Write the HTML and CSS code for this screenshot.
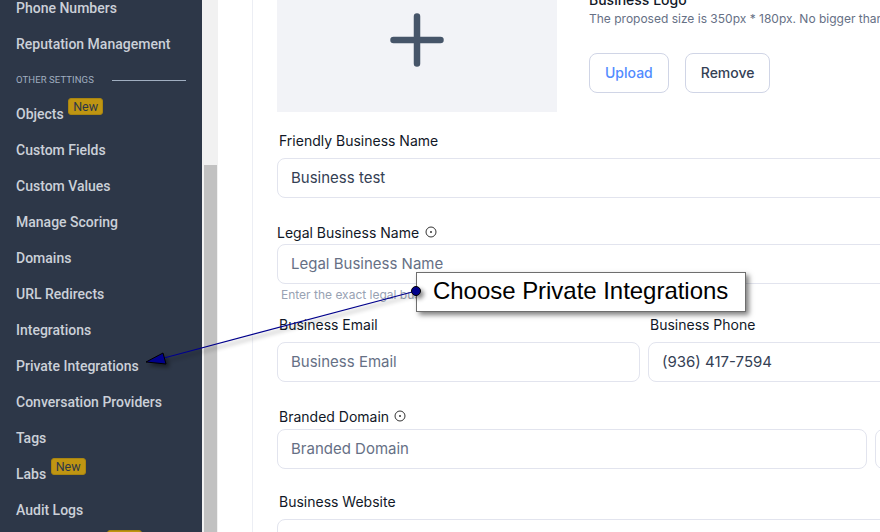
FILE: index.html
```html
<!DOCTYPE html>
<html lang="en">
<head>
<meta charset="utf-8">
<title>Business Profile</title>
<link rel="stylesheet" href="styles.css">
</head>
<body>
<div class="app">
  <aside class="sidebar">
    <nav class="nav">
      <a class="item">Phone Numbers</a>
      <a class="item">Reputation Management</a>
      <div class="section"><span>OTHER SETTINGS</span><i></i></div>
      <a class="item item-first">Objects <b class="new">New</b></a>
      <a class="item">Custom Fields</a>
      <a class="item">Custom Values</a>
      <a class="item">Manage Scoring</a>
      <a class="item">Domains</a>
      <a class="item">URL Redirects</a>
      <a class="item">Integrations</a>
      <a class="item">Private Integrations</a>
      <a class="item">Conversation Providers</a>
      <a class="item">Tags</a>
      <a class="item">Labs <b class="new">New</b></a>
      <a class="item">Audit Logs</a>
      <a class="item item-hidden"><b class="new">New</b></a>
    </nav>
  </aside>
  <div class="scrollbar"><div class="thumb"></div></div>
  <main class="main">
    <div class="card">
      <section class="logo-row">
        <div class="logo-box">
          <svg width="54" height="54" viewBox="0 0 54 54"><path d="M27 3.5v47M3.500 27h47" fill="none" stroke="#465569" stroke-width="6.500" stroke-linecap="round"/></svg>
        </div>
        <div class="logo-info">
          <div class="logo-title">Business Logo</div>
          <div class="logo-hint">The proposed size is 350px * 180px. No bigger than 2.5 MB</div>
          <div class="logo-actions">
            <button class="btn btn-upload">Upload</button>
            <button class="btn">Remove</button>
          </div>
        </div>
      </section>
      <div class="field field-friendly">
        <label class="label indent">Friendly Business Name</label>
        <div class="input value">Business test</div>
      </div>
      <div class="field field-legal">
        <label class="label label-tight">Legal Business Name
          <svg class="info" width="12" height="12" viewBox="0 0 12 12"><circle cx="6" cy="6" r="5" fill="none" stroke="#333" stroke-width="1"/><circle cx="6" cy="6" r="1" fill="#333"/></svg>
        </label>
        <div class="input">Legal Business Name</div>
        <div class="help">Enter the exact legal business name, as registered with the EIN</div>
      </div>
      <div class="two">
        <div class="field">
          <label class="label indent">Business Email</label>
          <div class="input">Business Email</div>
        </div>
        <div class="field">
          <label class="label indent">Business Phone</label>
          <div class="input value">(936) 417-7594</div>
        </div>
      </div>
      <div class="domain-row">
        <div class="field domain">
          <label class="label indent label-snug">Branded Domain
            <svg class="info" width="12" height="12" viewBox="0 0 12 12"><circle cx="6" cy="6" r="5" fill="none" stroke="#333" stroke-width="1"/><circle cx="6" cy="6" r="1" fill="#333"/></svg>
          </label>
          <div class="input">Branded Domain</div>
        </div>
        <div class="domain-side"></div>
      </div>
      <div class="field field-website">
        <label class="label indent">Business Website</label>
        <div class="input"></div>
      </div>
    </div>
  </main>
</div>
<div class="callout">Choose Private Integrations</div>
<svg class="arrow" width="880" height="532" viewBox="0 0 880 532">
  <defs><filter id="sh" x="-20%" y="-20%" width="150%" height="150%"><feDropShadow dx="3" dy="3" stdDeviation="2" flood-color="#000" flood-opacity=".45"/></filter></defs>
  <g filter="url(#sh)">
    <line x1="416" y1="291" x2="164" y2="358" stroke="#00008b" stroke-width="1.200"/>
    <path d="M146 362 L163 353 L166 364 Z" fill="#00008b" stroke="#000" stroke-width="1"/>
    <circle cx="416" cy="291" r="4.500" fill="#00008b" stroke="#000" stroke-width="1"/>
  </g>
</svg>
</body>
</html>
```
FILE: styles.css
```css
* { box-sizing: border-box; }
html, body { margin: 0; height: 100%; overflow: hidden; background: #fff; }
body { position: relative; width: 880px; height: 532px; font-family: Inter, sans-serif; }
.app { display: flex; height: 532px; overflow: hidden; }
.sidebar { width: 202px; flex: none; background: #2d3748; overflow: hidden; }
.nav { display: flex; flex-direction: column; padding: 0 16px; margin-top: -10px; }
.item { display: block; font: 500 14px/36px Roboto, sans-serif; height: 36px; color: #cbd0d8; white-space: nowrap; flex: none; }
.section { display: flex; align-items: center; height: 34px; margin-top: 1px; gap: 18px; font: 400 9.5px/34px Roboto, sans-serif; letter-spacing: .1px; color: #a0aec0; }
.section i { width: 74px; height: 1px; background: #a0aec0; }
.item-first { margin-top: -1px; }
.new { display: inline-block; position: relative; top: -8px; margin-left: 1px; height: 17px; padding: 0 4px; border: 1px solid #a98510; border-radius: 3px; background: #bf9512; color: #2d3748; font: 400 12.500px/15px Roboto, sans-serif; }
.item-hidden { padding-left: 90px; }
.scrollbar { width: 16px; flex: none; background: #f1f1f1; padding: 165px 1px 0 2px; }
.thumb { height: 100%; background: #c1c1c1; }
.main { flex: 1; min-width: 0; padding-left: 34px; background: #fff; overflow: hidden; }
.card { width: 800px; height: 700px; border-left: 1px solid #eceef4; padding-left: 24px; margin-top: -32px; }
.logo-row { display: flex; gap: 32px; height: 144px; }
.logo-box { width: 280px; height: 144px; background: #f2f3f7; display: flex; align-items: center; justify-content: center; }
.logo-info { padding-top: 22px; }
.logo-title { font: 500 14px/20px Inter, sans-serif; color: #111827; }
.logo-hint { font: 400 12px/16px Inter, sans-serif; color: #667085; white-space: nowrap; margin-top: 1px; }
.logo-actions { display: flex; gap: 16px; margin-top: 26px; }
.btn { height: 40px; padding: 0 15px; background: #fff; border: 1px solid #d0d5e6; border-radius: 8px; font: 500 14px/20px Inter, sans-serif; color: #344054; }
.btn-upload { color: #528bff; }
.field { display: flex; flex-direction: column; }
.field-friendly { margin-top: 19px; }
.field-legal { margin-top: 25px; }
.field-website { margin-top: 23px; }
.label { font: 400 14px/20px Inter, sans-serif; color: #111827; height: 20px; margin-bottom: 7px; white-space: nowrap; }
.label-tight { margin-bottom: 1px; }
.label-snug { margin-bottom: 2px; }
.indent { padding-left: 2px; }
.info { margin-left: 2px; }
.label-snug .info { margin-left: 1px; }
.input { height: 40px; width: 800px; border: 1px solid #e2e4ee; border-radius: 8px; padding: 0 13px; font: 400 15px/38px Inter, sans-serif; color: #667085; white-space: nowrap; background: #fff; }
.value { color: #344054; }
.help { font: 400 12px/16px Inter, sans-serif; color: #98a2b3; padding-left: 4px; margin-top: 3px; white-space: nowrap; }
.two { display: flex; gap: 8px; margin-top: 12px; }
.two .field { flex: none; }
.two .field:first-child { width: 363px; }
.two .field:first-child .input { width: 363px; }
.domain-row { display: flex; gap: 8px; margin-top: 25px; }
.domain { width: 590px; }
.domain .input { width: 590px; }
.domain-side { width: 100px; height: 40px; margin-top: 22px; border: 1px solid #e2e4ee; border-radius: 8px; flex: none; }
.callout { position: absolute; left: 416px; top: 272px; width: 330px; height: 40px; background: #fff; border: 1px solid #6e6e6e; box-shadow: 3px 3px 5px rgba(0,0,0,.5); padding-left: 16px; font: 400 24px/36px "Liberation Sans", Arial, sans-serif; letter-spacing: -.035px; color: #000; white-space: nowrap; }
.arrow { position: absolute; left: 0; top: 0; pointer-events: none; }
```
